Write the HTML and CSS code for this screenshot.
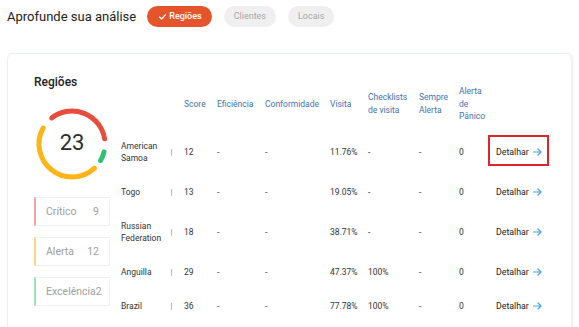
FILE: index.html
```html
<!DOCTYPE html>
<html lang="pt-BR">
<head>
<meta charset="utf-8">
<title>Aprofunde sua análise</title>
<link rel="stylesheet" href="styles.css">
</head>
<body>
<header class="topbar">
  <h1 class="topbar__title">Aprofunde sua análise</h1>
  <nav class="chips">
    <button class="chip chip--active">
      <svg class="chip__check" width="7" height="6" viewBox="0 0 7 6"><polyline points="0.6,3 2.6,5 6.4,0.8" fill="none" stroke="#fff" stroke-width="1.2" stroke-linecap="round" stroke-linejoin="round"/></svg>
      Regiões
    </button>
    <button class="chip">Clientes</button>
    <button class="chip">Locais</button>
  </nav>
</header>

<main class="card">
  <section class="summary">
    <h2 class="summary__title">Regiões</h2>
    <div class="donut">
      <svg class="donut__ring" width="76" height="76" viewBox="0 0 76 76">
        <path d="M17.68 12.00 A33 33 0 0 1 70.59 32.84" class="arc arc--red"/>
        <path d="M70.02 45.98 A33 33 0 0 1 66.58 54.5" class="arc arc--green"/>
        <path d="M60.51 62.14 A33 33 0 0 1 9.14 22.0" class="arc arc--yellow"/>
      </svg>
      <span class="donut__value">23</span>
    </div>
    <ul class="legend">
      <li class="legend__item legend__item--red"><span>Crítico</span><span>9</span></li>
      <li class="legend__item legend__item--yellow"><span>Alerta</span><span>12</span></li>
      <li class="legend__item legend__item--green"><span>Excelência</span><span>2</span></li>
    </ul>
  </section>

  <section class="table">
    <div class="table__head">
      <div></div><div></div>
      <div>Score</div>
      <div>Eficiência</div>
      <div>Conformidade</div>
      <div>Visita</div>
      <div>Checklists de visita</div>
      <div>Sempre Alerta</div>
      <div>Alerta de Pânico</div>
      <div></div>
    </div>

    <div class="table__row">
      <div>American Samoa</div><div><span class="bar"></span></div>
      <div>12</div><div>-</div><div>-</div><div>11.76%</div><div>-</div><div>-</div><div>0</div>
      <div><a class="detail detail--highlight">Detalhar <svg class="detail__arrow" width="9" height="8" viewBox="0 0 9 8"><path d="M0.5 4H8M5 1l3 3-3 3" fill="none" stroke="#42a5f5" stroke-width="1.2" stroke-linecap="round" stroke-linejoin="round"/></svg></a></div>
    </div>
    <div class="table__row">
      <div>Togo</div><div><span class="bar"></span></div>
      <div>13</div><div>-</div><div>-</div><div>19.05%</div><div>-</div><div>-</div><div>0</div>
      <div><a class="detail">Detalhar <svg class="detail__arrow" width="9" height="8" viewBox="0 0 9 8"><path d="M0.5 4H8M5 1l3 3-3 3" fill="none" stroke="#42a5f5" stroke-width="1.2" stroke-linecap="round" stroke-linejoin="round"/></svg></a></div>
    </div>
    <div class="table__row">
      <div>Russian Federation</div><div><span class="bar"></span></div>
      <div>18</div><div>-</div><div>-</div><div>38.71%</div><div>-</div><div>-</div><div>0</div>
      <div><a class="detail">Detalhar <svg class="detail__arrow" width="9" height="8" viewBox="0 0 9 8"><path d="M0.5 4H8M5 1l3 3-3 3" fill="none" stroke="#42a5f5" stroke-width="1.2" stroke-linecap="round" stroke-linejoin="round"/></svg></a></div>
    </div>
    <div class="table__row">
      <div>Anguilla</div><div><span class="bar"></span></div>
      <div>29</div><div>-</div><div>-</div><div>47.37%</div><div>100%</div><div>-</div><div>0</div>
      <div><a class="detail">Detalhar <svg class="detail__arrow" width="9" height="8" viewBox="0 0 9 8"><path d="M0.5 4H8M5 1l3 3-3 3" fill="none" stroke="#42a5f5" stroke-width="1.2" stroke-linecap="round" stroke-linejoin="round"/></svg></a></div>
    </div>
    <div class="table__row">
      <div>Brazil</div><div><span class="bar"></span></div>
      <div>36</div><div>-</div><div>-</div><div>77.78%</div><div>100%</div><div>-</div><div>0</div>
      <div><a class="detail">Detalhar <svg class="detail__arrow" width="9" height="8" viewBox="0 0 9 8"><path d="M0.5 4H8M5 1l3 3-3 3" fill="none" stroke="#42a5f5" stroke-width="1.2" stroke-linecap="round" stroke-linejoin="round"/></svg></a></div>
    </div>
  </section>
</main>
</body>
</html>
```
FILE: styles.css
```css
* { box-sizing: border-box; }
html, body { margin: 0; padding: 0; overflow: hidden; }
body {
  background: #fff;
  font-family: Roboto, "Liberation Sans", Arial, sans-serif;
  color: #222;
  width: 579px;
  height: 327px;
}

.topbar {
  display: flex;
  align-items: center;
  gap: 11px;
  padding: 6px 7px 0;
  height: 27px;
}
.topbar__title {
  margin: 0;
  font-size: 13px;
  font-weight: 400;
  color: #222;
  line-height: 21px;
}
.chips { display: flex; gap: 12px; }
.chip {
  display: inline-flex;
  align-items: center;
  gap: 3px;
  height: 21px;
  padding: 0 10px;
  border: 0;
  border-radius: 11px;
  background: #efefef;
  color: #a8a8a8;
  font-family: inherit;
  font-size: 9px;
  line-height: 1;
}
.chip--active {
  background: #e5552b;
  color: #fff;
  font-weight: 500;
  padding: 0 10px 0 12px;
}
.chip__check { display: block; }

.card {
  margin: 26px 7px 0;
  border: 1px solid #eceff3;
  border-radius: 6px;
  box-shadow: 1px 0 2px rgba(60, 90, 130, 0.10);
  padding: 19px 16px 20px 26px;
  display: flex;
  align-items: flex-start;
  gap: 11px;
}

.summary { width: 76px; flex: none; }
.summary__title {
  margin: 0;
  font-size: 12px;
  font-weight: 500;
  line-height: 18px;
  color: #222;
}
.donut {
  display: grid;
  width: 76px;
  height: 76px;
  margin-top: 15px;
}
.donut__ring, .donut__value { grid-area: 1 / 1; }
.donut__value {
  place-self: center;
  font-size: 22px;
  color: #2b2b2b;
  line-height: 1;
  margin-bottom: 3px;
}
.arc { fill: none; stroke-width: 5; stroke-linecap: round; }
.arc--red { stroke: #e84c3d; }
.arc--green { stroke: #2bc56e; }
.arc--yellow { stroke: #fdb415; }

.legend {
  list-style: none;
  margin: 15px 0 0;
  padding: 0;
  display: flex;
  flex-direction: column;
  gap: 11px;
}
.legend__item {
  display: flex;
  justify-content: space-between;
  align-items: center;
  height: 29px;
  padding: 0 10px;
  border: 1px solid #efefef;
  border-left: 2px solid;
  font-size: 10.5px;
  color: #9e9e9e;
  white-space: nowrap;
}
.legend__item--red { border-left-color: #f3a3a3; }
.legend__item--yellow { border-left-color: #fcd77f; }
.legend__item--green { border-left-color: #9ee2bc; }

.table { flex: 1; margin-top: 12px; }
.table__head, .table__row {
  display: grid;
  grid-template-columns: 50px 13px 33px 48px 65px 38px 51px 40px 37px auto;
  align-items: center;
}
.table__head {
  font-size: 8.5px;
  line-height: 12.5px;
  color: #3f72ae;
  padding-bottom: 6.5px;
}
.table__head > div { padding-right: 4px; }
.table__row {
  font-size: 8.5px;
  line-height: 12px;
  color: #333;
  padding: 11px 0;
}
.table__row > div { padding-right: 4px; }
.bar {
  display: block;
  width: 1px;
  height: 7px;
  background: #f1a2a2;
}
.detail {
  position: relative;
  display: inline-flex;
  align-items: center;
  gap: 4px;
  color: #222;
  font-size: 8.8px;
}
.detail__arrow { display: block; }
.detail--highlight::after {
  content: "";
  position: absolute;
  top: -11px;
  bottom: -8px;
  left: -8px;
  right: -7px;
  border: 2px solid #e0242a;
}
```
